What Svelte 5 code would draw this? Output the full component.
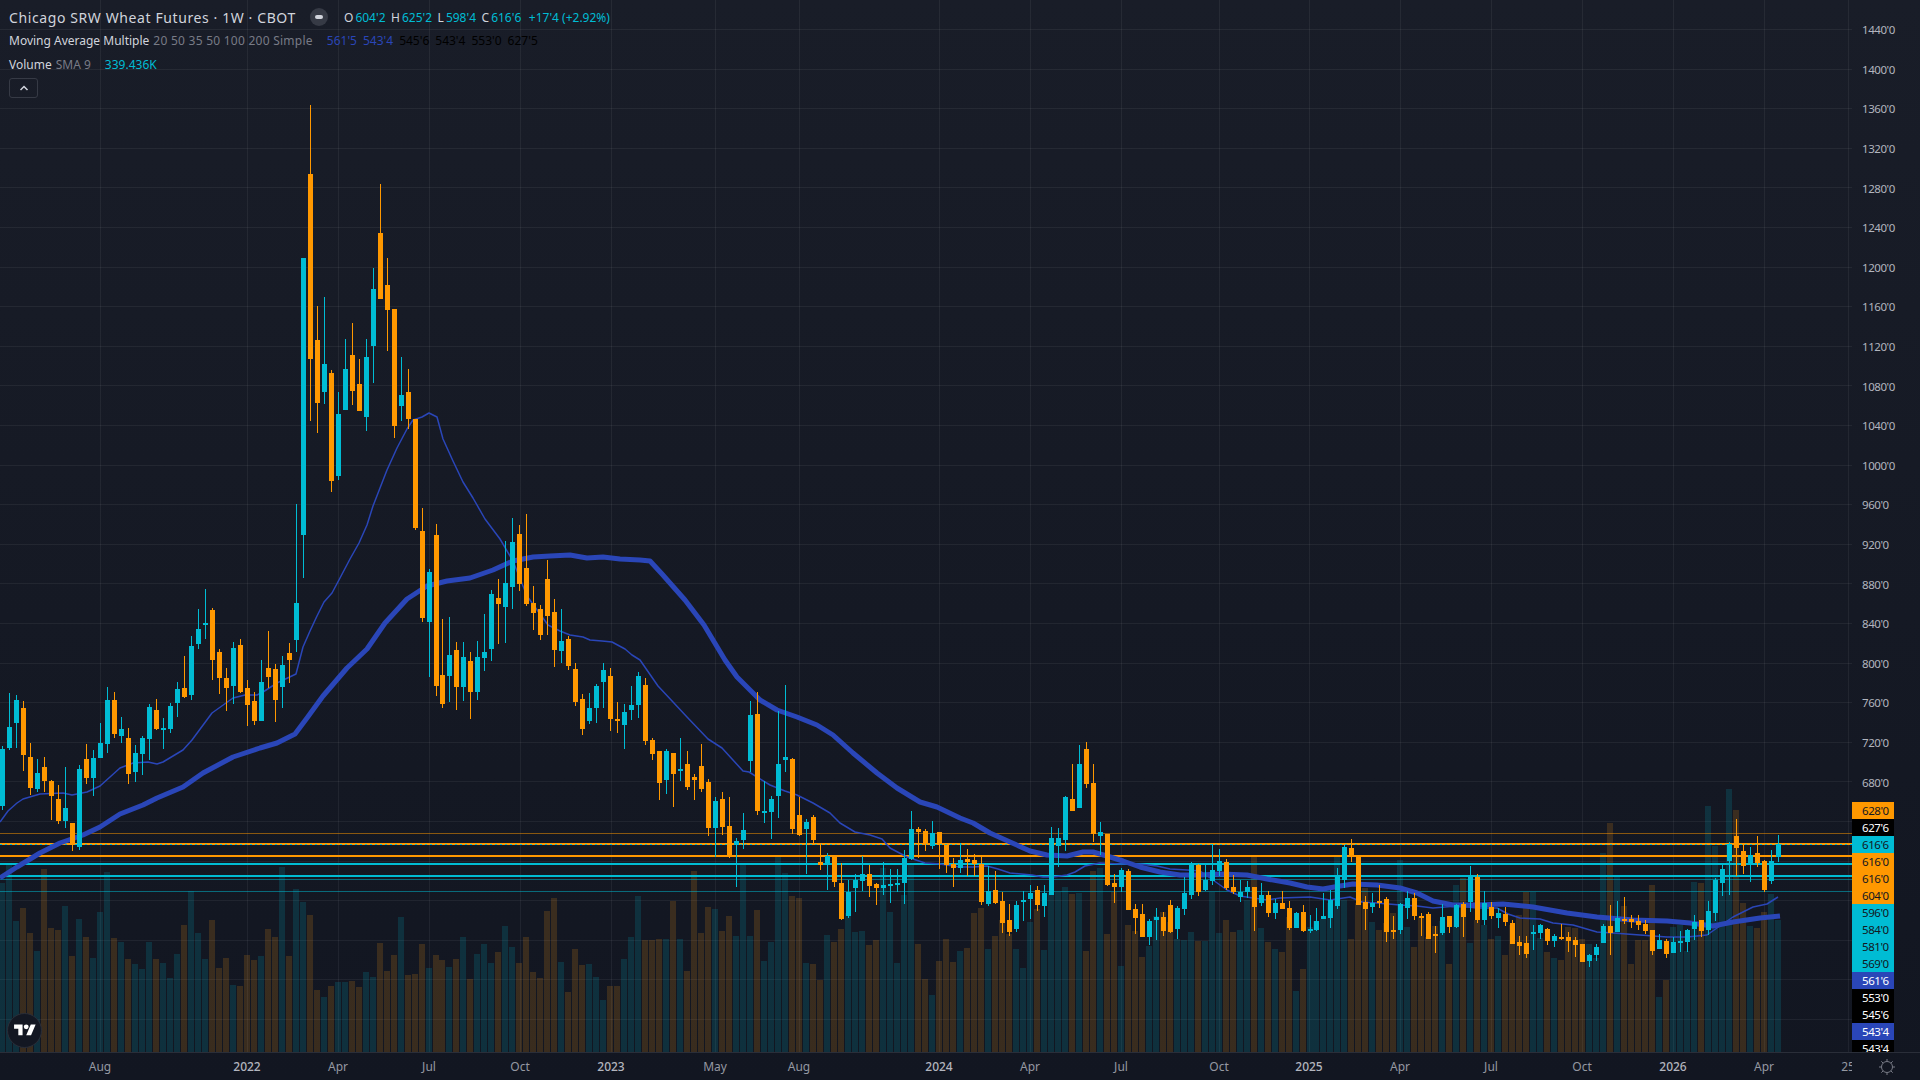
<script>
  // dir high bodyTop bodyBottom low volumeTop (all in chart pixels)
  const raw = `u 746 749 806 810 883
u 693 727 748 750 865
u 695 700 723 748 921
d 701 708 755 771 908
d 743 757 788 795 933
u 759 773 789 792 951
d 757 767 781 792 869
d 780 781 796 820 928
d 785 799 821 824 930
u 767 808 821 828 906
d 823 823 845 851 956
u 765 769 847 850 919
d 744 759 778 784 937
u 750 758 778 796 958
u 723 743 758 758 912
u 687 700 744 753 872
d 692 700 734 738 938
u 717 729 736 743 942
d 728 738 774 784 959
u 745 753 772 782 964
u 736 738 754 775 969
u 704 707 739 760 942
d 699 710 729 730 959
u 718 728 729 749 963
u 703 706 729 733 978
u 682 689 703 717 954
d 656 688 697 698 925
u 636 646 695 700 891
u 609 629 644 649 933
u 589 623 625 639 959
d 608 610 660 680 920
d 649 652 678 694 968
d 668 678 688 711 958
u 642 648 686 704 985
d 639 645 692 693 986
d 680 688 705 726 955
d 692 701 721 725 960
u 660 682 721 721 956
d 631 668 677 688 929
d 664 669 700 722 937
u 656 665 687 708 867
d 643 653 660 683 956
u 504 603 640 652 889
u 258 258 535 578 902
d 105 174 359 421 915
d 306 340 403 433 990
u 297 364 392 404 997
d 370 373 481 492 986
u 392 414 476 480 982
u 339 369 410 410 982
d 323 355 391 405 981
d 359 384 411 411 987
u 339 357 417 431 972
u 268 289 346 383 977
d 184 233 299 299 943
d 258 285 310 351 971
d 309 309 426 438 955
u 357 395 406 421 917
d 369 392 419 429 975
d 419 419 528 530 974
d 508 531 618 622 944
u 569 572 622 677 968
d 524 535 686 696 955
d 619 675 704 708 960
u 617 655 676 702 967
d 642 650 687 710 959
u 642 657 687 701 937
d 652 661 692 719 979
u 641 657 692 700 954
u 614 652 658 671 944
u 590 594 649 661 963
d 579 598 604 644 952
u 541 583 607 643 926
u 518 542 587 609 947
d 525 534 584 591 963
d 514 568 604 606 937
d 586 603 613 630 972
d 605 609 635 640 978
d 560 579 616 635 911
d 599 612 650 667 898
u 609 641 651 663 962
d 636 639 666 670 992
d 663 669 702 706 949
d 694 699 729 735 965
u 693 708 721 724 964
u 684 686 708 723 977
u 663 670 682 708 1000
d 668 676 719 731 986
d 702 719 721 733 986
u 704 712 725 749 959
u 686 705 710 720 937
u 672 676 705 718 896
d 678 685 741 745 940
d 738 740 754 760 940
d 751 751 783 800 939
u 749 751 780 794 939
d 753 753 774 807 901
u 738 769 771 781 939
d 751 764 787 790 971
d 774 777 780 800 871
d 744 766 789 792 933
d 779 782 828 836 907
u 797 801 828 857 909
d 792 799 827 835 931
d 797 826 857 858 916
u 838 841 845 887 936
u 813 830 840 849 864
u 701 715 761 772 936
d 692 714 811 815 910
u 781 811 813 823 961
u 796 799 812 839 942
u 711 764 796 818 855
u 685 757 760 772 873
d 758 759 829 834 896
d 797 815 835 836 898
u 819 822 829 874 963
d 815 817 840 844 964
d 844 862 865 870 980
u 853 856 864 890 935
d 856 856 882 887 942
d 863 883 919 920 929
u 880 892 916 918 913
u 874 880 888 912 932
u 856 874 881 891 931
d 865 874 886 897 945
d 883 884 888 905 940
u 862 885 888 895 868
u 869 884 886 903 912
u 869 883 885 892 963
u 850 858 883 904 895
u 811 829 859 860 863
d 827 829 832 858 944
d 829 831 844 851 979
u 821 833 846 849 995
d 832 832 844 869 961
d 845 845 865 873 939
d 858 864 868 887 962
u 843 860 868 873 951
d 849 859 862 876 948
d 854 860 864 876 913
d 857 864 902 905 908
u 866 891 904 906 949
d 871 890 903 904 936
d 892 901 923 933 920
d 904 920 932 936 934
u 901 905 929 932 949
u 891 900 902 921 968
u 885 893 899 919 922
d 886 890 905 911 909
u 885 893 906 917 950
u 827 838 895 895 893
u 828 838 846 867 892
u 796 797 840 851 887
d 764 799 811 811 894
u 745 764 808 808 893
d 742 749 784 788 951
d 764 783 834 842 871
u 822 832 836 855 868
d 834 834 885 886 934
d 874 883 887 903 892
u 868 870 887 892 966
d 869 871 910 910 925
d 904 909 918 934 931
d 904 914 937 937 957
u 919 921 937 945 946
u 908 917 920 940 916
d 912 917 931 936 912
d 900 905 932 933 922
u 906 908 929 939 939
u 877 893 909 915 940
u 862 864 895 899 932
d 864 865 892 896 941
u 864 880 890 891 941
u 844 870 881 885 892
u 849 861 871 876 933
d 859 862 888 890 920
d 875 887 892 894 932
u 880 892 897 902 930
u 881 887 892 898 900
d 887 887 907 931 857
u 883 895 903 906 928
d 891 895 913 917 942
u 899 903 913 919 949
d 891 903 909 909 952
d 901 908 928 930 917
u 912 913 928 928 991
d 905 912 931 932 969
u 915 929 930 933 927
u 908 921 930 931 921
u 893 916 919 919 919
u 890 900 918 928 903
u 868 876 906 909 857
u 845 847 880 888 900
d 839 848 856 862 939
d 856 856 905 905 903
d 896 902 909 930 888
u 893 903 907 913 922
d 885 901 903 908 930
d 897 899 932 942 923
d 916 930 931 939 913
u 903 904 930 934 860
u 891 898 908 919 927
d 893 898 916 920 947
d 913 916 918 936 917
d 912 914 939 939 937
d 926 934 935 953 926
u 904 917 933 935 921
d 916 916 927 933 964
u 904 905 927 928 885
d 902 904 917 937 878
u 866 876 902 912 943
d 874 877 920 923 920
u 891 903 920 925 925
d 902 907 916 919 939
u 908 913 918 928 936
d 907 914 922 926 955
d 920 923 944 944 925
d 936 942 946 955 915
d 936 943 954 958 892
u 925 932 934 950 892
u 924 925 933 939 938
d 928 929 941 945 952
u 934 936 941 947 958
d 924 937 938 940 960
d 932 937 941 952 927
d 937 940 945 957 928
d 944 944 962 962 939
u 954 955 961 967 944
u 944 947 955 961 958
u 924 926 943 943 853
d 905 926 933 955 823
u 901 918 932 932 877
d 897 919 921 924 906
d 915 919 922 928 964
d 915 921 925 930 940
d 920 924 931 934 940
d 930 930 951 955 885
u 934 940 949 949 997
d 939 941 954 958 980
u 937 942 953 953 927
u 931 941 943 952 925
u 929 930 942 952 951
u 915 922 929 940 882
d 920 920 931 937 883
u 901 911 930 935 806
u 878 880 913 921 846
u 865 869 883 896 892
u 842 844 861 895 789
d 819 836 848 876 810
d 845 851 866 874 903
u 847 855 865 882 926
d 836 853 863 867 928
d 860 861 890 892 912
u 850 861 881 884 894
u 835 844 857 862 920`;

  const bars = raw.split('\n').map((line, i) => {
    const [dir, high, top, bottom, low, vol] = line.split(' ');
    return { dir, high: +high, top: +top, bottom: +bottom, low: +low, vol: +vol, x: Math.round(6.992 * i) };
  });

  const chartBottom = 1052;

  const sma20 = `0,822 8,811 17,803 23,799 40,794 63,793 72,795 87,792 100,786 120,768 133,763 148,762 157,764 163,762 183,750 192,740 212,713 233,698 245,695 257,695 263,692 277,683 296,674 303,647 310,631 317,616 324,602 332,593 340,578 350,559 359,543 367,525 373,506 380,488 387,470 397,448 407,429 413,420 422,417 429,413 437,417 443,439 453,461 463,482 473,498 485,519 500,539 513,561 527,596 548,625 560,631 570,635 583,637 590,640 602,641 612,642 625,649 632,655 640,660 658,686 673,702 687,717 708,739 722,748 743,771 749,772 770,785 785,791 797,795 813,803 830,813 840,823 855,832 870,835 882,839 890,848 907,857 925,863 940,864 960,867 973,867 987,866 998,869 1010,873 1032,875 1043,877 1053,877 1067,875 1075,872 1085,866 1100,863 1120,864 1140,864 1157,866 1170,869 1187,870 1200,871 1213,880 1227,890 1240,896 1253,898 1267,900 1280,898 1310,897 1330,900 1350,897 1362,902 1377,903 1400,905 1417,906 1433,908 1457,906 1477,908 1497,908 1508,914 1520,918 1540,919 1553,923 1573,925 1597,932 1613,933 1640,935 1667,937 1687,937 1707,935 1717,928 1733,917 1753,907 1767,904 1778,897`;

  const sma50 = `0,878 17,867 40,853 60,843 83,835 100,827 120,814 143,805 157,798 183,787 203,773 233,757 260,748 277,743 295,734 307,718 323,696 347,668 367,649 385,623 407,599 427,586 447,581 470,578 493,570 513,561 533,557 550,556 570,555 587,558 603,557 620,559 640,560 650,561 662,574 685,600 704,625 725,660 737,677 760,700 777,710 797,717 817,725 833,735 853,753 877,773 897,788 920,802 937,807 960,818 973,823 990,833 1010,842 1030,851 1047,855 1067,856 1083,852 1093,852 1107,856 1123,861 1140,867 1160,872 1180,875 1200,875 1220,874 1247,875 1267,879 1290,883 1307,887 1323,889 1340,886 1353,884 1377,885 1400,888 1417,893 1433,901 1453,905 1477,905 1503,904 1533,907 1567,913 1597,917 1633,920 1667,921 1690,923 1713,926 1733,922 1760,918 1780,916`;

  const priceLabels = [1440, 1400, 1360, 1320, 1280, 1240, 1200, 1160, 1120, 1080, 1040, 1000, 960, 920, 880, 840, 800, 760, 720, 680];
  const hGrid = Array.from({ length: 26 }, (_, k) => Math.round(29 + 39.6 * k) + 0.5);

  const timeTicks = [
    { x: 100, label: 'Aug' }, { x: 247, label: '2022', year: true }, { x: 338, label: 'Apr' },
    { x: 429, label: 'Jul' }, { x: 520, label: 'Oct' }, { x: 611, label: '2023', year: true },
    { x: 715, label: 'May' }, { x: 799, label: 'Aug' }, { x: 939, label: '2024', year: true },
    { x: 1030, label: 'Apr' }, { x: 1121, label: 'Jul' }, { x: 1219, label: 'Oct' },
    { x: 1309, label: '2025', year: true }, { x: 1400, label: 'Apr' }, { x: 1491, label: 'Jul' },
    { x: 1582, label: 'Oct' }, { x: 1673, label: '2026', year: true }, { x: 1764, label: 'Apr' },
    { x: 1848, label: '25' }
  ];

  const tags = [
    { text: "628'0", kind: 'orange' }, { text: "627'6", kind: 'black' }, { text: "616'6", kind: 'cyan' },
    { text: "616'0", kind: 'orange' }, { text: "616'0", kind: 'orange' }, { text: "604'0", kind: 'orange' },
    { text: "596'0", kind: 'cyan' }, { text: "584'0", kind: 'cyan' }, { text: "581'0", kind: 'cyan' },
    { text: "569'0", kind: 'cyan' }, { text: "561'6", kind: 'blue' }, { text: "553'0", kind: 'black' },
    { text: "545'6", kind: 'black' }, { text: "543'4", kind: 'blue' }, { text: "543'4", kind: 'black' }
  ];
</script>

<div class="terminal">
  <div class="pane">
    <svg class="chart" width="1852" height="1052" viewBox="0 0 1852 1052">
      <g class="grid">
        {#each hGrid as y}
          <line x1="0" x2="1852" y1={y} y2={y} />
        {/each}
        {#each timeTicks as t}
          <line x1={t.x + 0.5} x2={t.x + 0.5} y1="0" y2="1052" />
        {/each}
      </g>

      <g shape-rendering="crispEdges">
        {#each bars as b}
          <rect class={b.dir === 'u' ? 'vol-up' : 'vol-down'} x={b.x - 1} y={b.vol} width="6" height={chartBottom - b.vol} />
        {/each}
      </g>

      <g shape-rendering="crispEdges">
        <line class="level thin-orange" x1="0" x2="1852" y1="833.5" y2="833.5" />
        <line class="level orange" x1="0" x2="1852" y1="844" y2="844" />
        <line class="level dashed" x1="0" x2="1852" y1="844" y2="844" />
        <line class="level orange" x1="0" x2="1852" y1="856" y2="856" />
        <line class="level cyan" x1="0" x2="1852" y1="864" y2="864" />
        <line class="level cyan" x1="0" x2="1852" y1="876" y2="876" />
        <line class="level thin-cyan" x1="0" x2="1852" y1="879.5" y2="879.5" />
        <line class="level thin-cyan" x1="0" x2="1852" y1="891.5" y2="891.5" />
      </g>

      <polyline class="ma" points={sma20} />
      <polyline class="ma thick" points={sma50} />

      <g shape-rendering="crispEdges">
        {#each bars as b}
          <g class={b.dir === 'u' ? 'up' : 'down'}>
            <rect x={b.x + 2} y={b.high} width="1" height={b.low - b.high} />
            <rect x={b.x} y={b.top} width="5" height={Math.max(b.bottom - b.top, 2)} />
          </g>
        {/each}
      </g>
    </svg>

    <div class="legend">
      <div class="legend-row title-row">
        <span class="title">Chicago SRW Wheat Futures · 1W · CBOT</span>
        <span class="status"><i></i></span>
        <span class="ohlc">
          <span>O<b>604'2</b></span>
          <span>H<b>625'2</b></span>
          <span>L<b>598'4</b></span>
          <span>C<b>616'6</b></span>
          <b>+17'4 (+2.92%)</b>
        </span>
      </div>
      <div class="legend-row study">
        <span class="name">Moving Average Multiple</span>
        <span class="args">20 50 35 50 100 200 Simple</span>
        <span class="values">
          <span class="blue">561'5</span>
          <span class="blue">543'4</span>
          <span class="black">545'6</span>
          <span class="black">543'4</span>
          <span class="black">553'0</span>
          <span class="black">627'5</span>
        </span>
      </div>
      <div class="legend-row study">
        <span class="name">Volume</span>
        <span class="args short">SMA 9</span>
        <span class="values"><span class="teal">339.436K</span></span>
      </div>
      <button class="collapse" aria-label="Collapse">
        <svg width="10" height="6" viewBox="0 0 10 6"><path d="M1.5 5 5 1.5 8.5 5" /></svg>
      </button>
    </div>

    <div class="logo">
      <svg width="22" height="17" viewBox="0 0 36 28">
        <path d="M14 22H7V11H0V4h14v18zM28 22h-8l7.5-18h8L28 22z" />
        <circle cx="20" cy="8" r="4" />
      </svg>
    </div>
  </div>

  <div class="price-axis">
    {#each priceLabels as p}
      <div class="price">{p}'0</div>
    {/each}
    <div class="tags">
      {#each tags as tag}
        <div class="tag {tag.kind}">{tag.text}</div>
      {/each}
    </div>
  </div>

  <div class="time-axis">
    {#each timeTicks as t, i}
      <div class="tick" class:year={t.year} style="width: {(timeTicks[i + 1]?.x ?? 1900) - t.x}px"><span>{t.label}</span></div>
    {/each}
  </div>

  <div class="corner">
    <svg width="20" height="20" viewBox="0 0 20 20">
      <circle cx="10" cy="10" r="5.5" />
      <path d="M10 2v2.5M10 15.5V18M2 10h2.5M15.5 10H18M4.3 4.3l1.8 1.8M13.9 13.9l1.8 1.8M4.3 15.7l1.8-1.8M13.9 6.1l1.8-1.8" />
    </svg>
  </div>
</div>

<style>
  :global(body) {
    margin: 0;
    background: #131722;
  }

  .terminal {
    display: grid;
    grid-template-columns: 1852px 68px;
    grid-template-rows: 1052px 28px;
    width: 1920px;
    height: 1080px;
    overflow: hidden;
    background: linear-gradient(#191d28, #121621);
    font-family: "Noto Sans", sans-serif;
    color: #b2b5be;
  }

  .pane {
    position: relative;
    overflow: hidden;
  }

  .chart {
    display: block;
  }

  .grid line {
    stroke: rgba(255, 255, 255, 0.06);
    stroke-width: 1;
  }

  .vol-up {
    fill: rgba(0, 188, 212, 0.16);
  }

  .vol-down {
    fill: rgba(255, 152, 20, 0.17);
  }

  .level {
    stroke-width: 2;
  }

  .level.orange {
    stroke: #ff9800;
  }

  .level.cyan {
    stroke: #00bcd4;
  }

  .level.dashed {
    stroke: #00bcd4;
    stroke-width: 1;
    stroke-dasharray: 2 3;
  }

  .level.thin-orange {
    stroke: #ff9800;
    stroke-width: 1;
    opacity: 0.5;
  }

  .level.thin-cyan {
    stroke: #00bcd4;
    stroke-width: 1;
    opacity: 0.5;
  }

  .ma {
    fill: none;
    stroke: #2a46b8;
    stroke-width: 1.5;
    stroke-linejoin: round;
  }

  .ma.thick {
    stroke-width: 5;
  }

  .up rect {
    fill: #00bcd4;
  }

  .down rect {
    fill: #ff9800;
  }

  /* overlays on the chart */
  .legend {
    position: absolute;
    top: 5px;
    left: 9px;
    display: flex;
    flex-direction: column;
    align-items: flex-start;
  }

  .legend-row {
    display: flex;
    align-items: center;
    white-space: nowrap;
  }

  .title-row {
    height: 24px;
    font-size: 14px;
    color: #d1d4dc;
  }

  .title {
    width: 301px;
    letter-spacing: 0.6px;
  }

  .status {
    display: flex;
    align-items: center;
    justify-content: center;
    width: 18px;
    height: 18px;
    margin-right: 16px;
    border-radius: 50%;
    background: #363a45;
  }

  .status i {
    width: 8px;
    height: 4px;
    border-radius: 2px;
    background: #d1d4dc;
  }

  .ohlc {
    display: flex;
    gap: 5.5px;
    font-size: 12px;
  }

  .ohlc b {
    margin-left: 2px;
    font-weight: 400;
    color: #00bcd4;
  }

  .study {
    height: 23.5px;
    font-size: 12px;
    color: #d1d4dc;
  }

  .args {
    margin-left: 4px;
    letter-spacing: 0.25px;
    color: #787b86;
  }

  .args.short {
    letter-spacing: 0;
  }

  .values {
    display: flex;
    gap: 6px;
    margin-left: 14px;
  }

  .blue {
    color: #2a46b8;
  }

  .black {
    color: #000;
  }

  .teal {
    color: #00bcd4;
  }

  .collapse {
    display: flex;
    align-items: center;
    justify-content: center;
    width: 29px;
    height: 20px;
    margin-top: 2px;
    padding: 0;
    border: 1px solid #363a45;
    border-radius: 3px;
    background: transparent;
  }

  .collapse path {
    fill: none;
    stroke: #d1d4dc;
    stroke-width: 1.5;
  }

  .logo {
    position: absolute;
    left: 7px;
    top: 1013px;
    display: flex;
    align-items: center;
    justify-content: center;
    width: 33px;
    height: 33px;
    border: 1px solid #2a2e39;
    border-radius: 50%;
    background: #131722;
  }

  .logo svg {
    fill: #fff;
  }

  .price-axis {
    position: relative;
    overflow: hidden;
    padding-top: 10px;
    box-sizing: border-box;
    font-size: 11.5px;
    letter-spacing: -0.45px;
  }

  .price {
    display: flex;
    align-items: center;
    height: 39.6px;
    padding-left: 10px;
  }

  .tags {
    position: absolute;
    top: 802px;
    left: 0;
    width: 42px;
  }

  .tag {
    display: flex;
    align-items: center;
    height: 17px;
    padding-left: 10px;
    box-sizing: border-box;
  }

  .tag.orange {
    background: #ff9800;
    color: #131722;
  }

  .tag.cyan {
    background: #00bcd4;
    color: #131722;
  }

  .tag.blue {
    background: #2a46b8;
    color: #fff;
  }

  .tag.black {
    background: #000;
    color: #fff;
  }

  .time-axis {
    display: flex;
    align-items: center;
    padding-left: 100px;
    box-sizing: border-box;
    overflow: hidden;
    border-top: 1px solid #2a2e39;
    font-size: 12px;
    color: #9598a1;
  }

  .tick {
    flex: none;
  }

  .tick span {
    display: inline-block;
    transform: translateX(-50%);
  }

  .tick.year {
    color: #b2b5be;
    font-weight: 500;
  }

  .corner {
    display: flex;
    align-items: center;
    padding-left: 25px;
    border-top: 1px solid #2a2e39;
  }

  .corner svg {
    fill: none;
    stroke: #787b86;
    stroke-width: 1;
  }
</style>
